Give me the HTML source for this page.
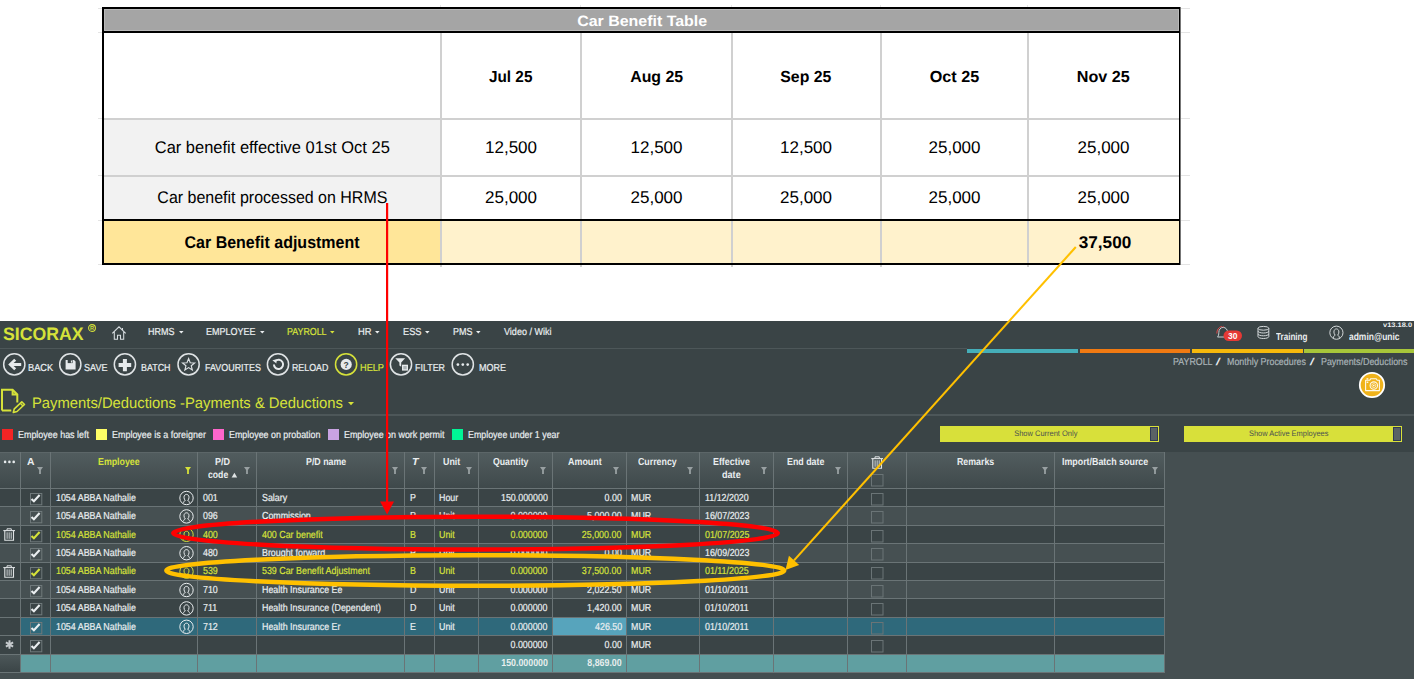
<!DOCTYPE html><html><head><meta charset="utf-8"><style>
*{margin:0;padding:0}
html,body{width:1420px;height:687px;overflow:hidden;background:#fff;position:relative}
.t{position:absolute;white-space:pre;font-family:"Liberation Sans",sans-serif;text-rendering:geometricPrecision}
.r{position:absolute}
.s{position:absolute;overflow:visible}
.dk .t{-webkit-text-stroke-width:0.2px}
</style></head><body><div class="r" style="left:104px;top:9px;width:1075px;height:22px;background:#a5a5a5;"></div>
<div class="r" style="left:104px;top:30px;width:1075px;height:1px;background:#b9b9b9;"></div>
<div class="r" style="left:104px;top:9px;width:1075px;height:1px;background:#b9b9b9;"></div>
<div class="r" style="left:104px;top:9px;width:1px;height:22px;background:#b9b9b9;"></div>
<div class="r" style="left:1178px;top:9px;width:1px;height:22px;background:#b9b9b9;"></div>
<div class="r" style="left:104px;top:120px;width:336px;height:55px;background:#f2f2f2;"></div>
<div class="r" style="left:104px;top:177px;width:336px;height:42px;background:#f2f2f2;"></div>
<div class="r" style="left:104px;top:221px;width:336px;height:42px;background:#ffe699;"></div>
<div class="r" style="left:442px;top:221px;width:737px;height:42px;background:#fff2cc;"></div>
<div class="r" style="left:104px;top:118px;width:1075px;height:2px;background:#d0d0d0;"></div>
<div class="r" style="left:104px;top:175px;width:1075px;height:2px;background:#d0d0d0;"></div>
<div class="r" style="left:440px;top:33px;width:2px;height:234px;background:#d0d0d0;"></div>
<div class="r" style="left:580px;top:33px;width:2px;height:234px;background:#d0d0d0;"></div>
<div class="r" style="left:731px;top:33px;width:2px;height:234px;background:#d0d0d0;"></div>
<div class="r" style="left:880px;top:33px;width:2px;height:234px;background:#d0d0d0;"></div>
<div class="r" style="left:1027px;top:33px;width:2px;height:234px;background:#d0d0d0;"></div>
<div class="r" style="left:98px;top:8px;width:4px;height:1px;background:#e4e4e4;"></div>
<div class="r" style="left:1181px;top:8px;width:9px;height:1px;background:#e4e4e4;"></div>
<div class="r" style="left:98px;top:32px;width:4px;height:1px;background:#e4e4e4;"></div>
<div class="r" style="left:1181px;top:32px;width:9px;height:1px;background:#e4e4e4;"></div>
<div class="r" style="left:98px;top:118px;width:4px;height:1px;background:#e4e4e4;"></div>
<div class="r" style="left:1181px;top:118px;width:9px;height:1px;background:#e4e4e4;"></div>
<div class="r" style="left:98px;top:175px;width:4px;height:1px;background:#e4e4e4;"></div>
<div class="r" style="left:1181px;top:175px;width:9px;height:1px;background:#e4e4e4;"></div>
<div class="r" style="left:98px;top:220px;width:4px;height:1px;background:#e4e4e4;"></div>
<div class="r" style="left:1181px;top:220px;width:9px;height:1px;background:#e4e4e4;"></div>
<div class="r" style="left:98px;top:264px;width:4px;height:1px;background:#e4e4e4;"></div>
<div class="r" style="left:1181px;top:264px;width:9px;height:1px;background:#e4e4e4;"></div>
<div class="r" style="left:440px;top:5px;width:1px;height:2px;background:#e8e8e8;"></div>
<div class="r" style="left:580px;top:5px;width:1px;height:2px;background:#e8e8e8;"></div>
<div class="r" style="left:731px;top:5px;width:1px;height:2px;background:#e8e8e8;"></div>
<div class="r" style="left:880px;top:5px;width:1px;height:2px;background:#e8e8e8;"></div>
<div class="r" style="left:1027px;top:5px;width:1px;height:2px;background:#e8e8e8;"></div>
<div class="r" style="left:102px;top:7px;width:1079px;height:2px;background:#000;"></div>
<div class="r" style="left:102px;top:31px;width:1078px;height:2px;background:#000;"></div>
<div class="r" style="left:102px;top:219px;width:1078px;height:2px;background:#000;"></div>
<div class="r" style="left:102px;top:263px;width:1078px;height:2px;background:#000;"></div>
<div class="r" style="left:102px;top:7px;width:2px;height:258px;background:#000;"></div>
<div class="r" style="left:1179px;top:7px;width:1px;height:258px;background:#000;"></div>
<div class="r" style="left:1180px;top:7px;width:1px;height:258px;background:#777;"></div>
<div class="t" style="left:580.87px;top:12.00px;font-size:15px;line-height:20px;color:#fff;font-weight:bold;font-style:normal;transform:scaleX(1.0633);transform-origin:50% 0;-webkit-text-stroke-width:0;">Car Benefit Table</div>
<div class="t" style="left:488.30px;top:67.00px;font-size:16px;line-height:21px;color:#000;font-weight:bold;font-style:normal;transform:scaleX(0.9580);transform-origin:50% 0;-webkit-text-stroke-width:0;">Jul 25</div>
<div class="t" style="left:629.80px;top:67.00px;font-size:16px;line-height:21px;color:#000;font-weight:bold;font-style:normal;transform:scaleX(0.9927);transform-origin:50% 0;-webkit-text-stroke-width:0;">Aug 25</div>
<div class="t" style="left:780.19px;top:67.00px;font-size:16px;line-height:21px;color:#000;font-weight:bold;font-style:normal;transform:scaleX(0.9879);transform-origin:50% 0;-webkit-text-stroke-width:0;">Sep 25</div>
<div class="t" style="left:930.02px;top:67.00px;font-size:16px;line-height:21px;color:#000;font-weight:bold;font-style:normal;transform:scaleX(1.0112);transform-origin:50% 0;-webkit-text-stroke-width:0;">Oct 25</div>
<div class="t" style="left:1077.24px;top:67.00px;font-size:16px;line-height:21px;color:#000;font-weight:bold;font-style:normal;transform:scaleX(1.0092);transform-origin:50% 0;-webkit-text-stroke-width:0;">Nov 25</div>
<div class="t" style="left:151.07px;top:136.00px;font-size:17px;line-height:23px;color:#000;font-weight:normal;font-style:normal;transform:scaleX(0.9692);transform-origin:50% 0;">Car benefit effective 01st Oct 25</div>
<div class="t" style="left:149.66px;top:186.00px;font-size:17px;line-height:23px;color:#000;font-weight:normal;font-style:normal;transform:scaleX(0.9400);transform-origin:50% 0;">Car benefit processed on HRMS</div>
<div class="t" style="left:178.67px;top:231.00px;font-size:17px;line-height:23px;color:#000;font-weight:bold;font-style:normal;transform:scaleX(0.9405);transform-origin:50% 0;-webkit-text-stroke-width:0;">Car Benefit adjustment</div>
<div class="t" style="left:485.01px;top:136.00px;font-size:17px;line-height:23px;color:#000;font-weight:normal;font-style:normal;">12,500</div>
<div class="t" style="left:630.51px;top:136.00px;font-size:17px;line-height:23px;color:#000;font-weight:normal;font-style:normal;">12,500</div>
<div class="t" style="left:780.01px;top:136.00px;font-size:17px;line-height:23px;color:#000;font-weight:normal;font-style:normal;">12,500</div>
<div class="t" style="left:928.51px;top:136.00px;font-size:17px;line-height:23px;color:#000;font-weight:normal;font-style:normal;">25,000</div>
<div class="t" style="left:1077.51px;top:136.00px;font-size:17px;line-height:23px;color:#000;font-weight:normal;font-style:normal;">25,000</div>
<div class="t" style="left:485.01px;top:186.00px;font-size:17px;line-height:23px;color:#000;font-weight:normal;font-style:normal;">25,000</div>
<div class="t" style="left:630.51px;top:186.00px;font-size:17px;line-height:23px;color:#000;font-weight:normal;font-style:normal;">25,000</div>
<div class="t" style="left:780.01px;top:186.00px;font-size:17px;line-height:23px;color:#000;font-weight:normal;font-style:normal;">25,000</div>
<div class="t" style="left:928.51px;top:186.00px;font-size:17px;line-height:23px;color:#000;font-weight:normal;font-style:normal;">25,000</div>
<div class="t" style="left:1077.51px;top:186.00px;font-size:17px;line-height:23px;color:#000;font-weight:normal;font-style:normal;">25,000</div>
<div class="t" style="left:1078.71px;top:231.00px;font-size:17px;line-height:23px;color:#000;font-weight:bold;font-style:normal;transform:scaleX(1.0099);transform-origin:50% 0;-webkit-text-stroke-width:0;">37,500</div>
<div class="dk">
<div class="r" style="left:0px;top:321px;width:1414px;height:358px;background:#3a4446;"></div>
<div class="t" style="left:2.60px;top:322.00px;font-size:18px;line-height:24px;color:#d6e23a;font-weight:bold;font-style:normal;transform:scaleX(0.9829);transform-origin:0 0;-webkit-text-stroke-width:0">SICORAX</div>
<svg class="s" style="left:88px;top:324px;" width="8" height="8" viewBox="0 0 8 8"><circle cx="4" cy="4" r="3.4" fill="none" stroke="#d6e23a" stroke-width="1.1"/><text x="4" y="6.2" font-size="5.5" font-family="Liberation Sans" font-weight="bold" text-anchor="middle" fill="#d6e23a">R</text></svg>
<svg class="s" style="left:111px;top:325px;" width="16" height="16" viewBox="0 0 16 16"><path d="M1.3 8.3L8 1.8L14.7 8.3M3.3 6.5V14.3H6.5V10.2H9.5V14.3H12.7V6.5M11.5 3V5.5" fill="none" stroke="#d7dde0" stroke-width="1.05" stroke-linejoin="miter"/></svg>
<div class="t" style="left:148.00px;top:326.00px;font-size:10.2px;line-height:14px;color:#eaeef0;font-weight:normal;font-style:normal;transform:scaleX(0.8833);transform-origin:0 0;">HRMS</div>
<svg class="s" style="left:178.5px;top:330.8px;" width="4.6" height="2.6" viewBox="0 0 4.6 2.6"><path d="M0 0H4.6L2.3 2.6Z" fill="#eaeef0"/></svg>
<div class="t" style="left:206.00px;top:326.00px;font-size:10.2px;line-height:14px;color:#eaeef0;font-weight:normal;font-style:normal;transform:scaleX(0.8829);transform-origin:0 0;">EMPLOYEE</div>
<svg class="s" style="left:259.5px;top:330.8px;" width="4.6" height="2.6" viewBox="0 0 4.6 2.6"><path d="M0 0H4.6L2.3 2.6Z" fill="#eaeef0"/></svg>
<div class="t" style="left:286.90px;top:326.00px;font-size:10.2px;line-height:14px;color:#d6e23a;font-weight:normal;font-style:normal;transform:scaleX(0.8678);transform-origin:0 0;">PAYROLL</div>
<svg class="s" style="left:330.2px;top:330.8px;" width="4.6" height="2.6" viewBox="0 0 4.6 2.6"><path d="M0 0H4.6L2.3 2.6Z" fill="#d6e23a"/></svg>
<div class="t" style="left:357.70px;top:326.00px;font-size:10.2px;line-height:14px;color:#eaeef0;font-weight:normal;font-style:normal;transform:scaleX(0.9172);transform-origin:0 0;">HR</div>
<svg class="s" style="left:375px;top:330.8px;" width="4.6" height="2.6" viewBox="0 0 4.6 2.6"><path d="M0 0H4.6L2.3 2.6Z" fill="#eaeef0"/></svg>
<div class="t" style="left:402.70px;top:326.00px;font-size:10.2px;line-height:14px;color:#eaeef0;font-weight:normal;font-style:normal;transform:scaleX(0.9073);transform-origin:0 0;">ESS</div>
<svg class="s" style="left:425.3px;top:330.8px;" width="4.6" height="2.6" viewBox="0 0 4.6 2.6"><path d="M0 0H4.6L2.3 2.6Z" fill="#eaeef0"/></svg>
<div class="t" style="left:452.80px;top:326.00px;font-size:10.2px;line-height:14px;color:#eaeef0;font-weight:normal;font-style:normal;transform:scaleX(0.8832);transform-origin:0 0;">PMS</div>
<svg class="s" style="left:476px;top:330.8px;" width="4.6" height="2.6" viewBox="0 0 4.6 2.6"><path d="M0 0H4.6L2.3 2.6Z" fill="#eaeef0"/></svg>
<div class="t" style="left:503.50px;top:326.00px;font-size:10.2px;line-height:14px;color:#eaeef0;font-weight:normal;font-style:normal;transform:scaleX(0.8860);transform-origin:0 0;">Video / Wiki</div>
<div class="r" style="left:0px;top:348px;width:967px;height:1px;background:#4d5759;"></div>
<svg class="s" style="left:1214px;top:324px;" width="18" height="18" viewBox="0 0 18 18"><path d="M3.5 13C4.5 12 4.8 10.5 4.8 8.6C4.8 5.6 6.6 3.4 9.2 3.4C11.8 3.4 13.6 5.6 13.6 8.6C13.6 10.5 13.9 12 14.9 13Z" fill="none" stroke="#c9cfd2" stroke-width="1"/><path d="M9.2 3.4V2.2M2.8 9.5C2.8 6 4.6 3.2 7.8 2.4" fill="none" stroke="#e04848" stroke-width="1"/></svg>
<svg class="s" style="left:1223px;top:330px;" width="20" height="12" viewBox="0 0 20 12"><rect x="0.5" y="0.5" width="18.5" height="10.5" rx="5.2" fill="#e53935"/><text x="9.7" y="8.7" font-size="8.5" font-family="Liberation Sans" font-weight="bold" text-anchor="middle" fill="#fff">30</text></svg>
<svg class="s" style="left:1256px;top:325px;" width="15" height="15" viewBox="0 0 15 15"><ellipse cx="7.4" cy="3.3" rx="5.4" ry="1.9" fill="none" stroke="#d3d8da" stroke-width="1"/><path d="M2 3.3V11.6C2 12.6 4.4 13.5 7.4 13.5C10.4 13.5 12.8 12.6 12.8 11.6V3.3M2 6.1C2 7.1 4.4 8 7.4 8C10.4 8 12.8 7.1 12.8 6.1M2 8.9C2 9.9 4.4 10.8 7.4 10.8C10.4 10.8 12.8 9.9 12.8 8.9" fill="none" stroke="#d3d8da" stroke-width="1"/></svg>
<div class="t" style="left:1276.30px;top:331.00px;font-size:10.2px;line-height:14px;color:#eaeef0;font-weight:bold;font-style:normal;transform:scaleX(0.7953);transform-origin:0 0;-webkit-text-stroke-width:0;">Training</div>
<svg class="s" style="left:1328px;top:324px;" width="17" height="17" viewBox="0 0 17 17"><circle cx="8.4" cy="8.7" r="6.6" fill="none" stroke="#d3d8da" stroke-width="1"/><path d="M5.5 14.3V13.2C5.5 12.3 6.4 11.6 7.2 11.2C6.4 10.5 5.9 9.3 5.9 8C5.9 6.1 7 4.9 8.4 4.9C9.8 4.9 10.9 6.1 10.9 8C10.9 9.3 10.4 10.5 9.6 11.2C10.4 11.6 11.3 12.3 11.3 13.2V14.3" fill="none" stroke="#d3d8da" stroke-width="1"/></svg>
<div class="t" style="left:1349.00px;top:331.00px;font-size:10.2px;line-height:14px;color:#eaeef0;font-weight:bold;font-style:normal;transform:scaleX(0.8296);transform-origin:0 0;-webkit-text-stroke-width:0;">admin@unic</div>
<div class="t" style="left:1383.30px;top:321.00px;font-size:6.5px;line-height:9px;color:#eaeef0;font-weight:bold;font-style:normal;transform:scaleX(1.1471);transform-origin:0 0;-webkit-text-stroke-width:0;">v13.18.0</div>
<div class="r" style="left:967px;top:349px;width:111px;height:4px;background:#45aeb9;"></div>
<div class="r" style="left:1080px;top:349px;width:110px;height:4px;background:#f07a12;"></div>
<div class="r" style="left:1192px;top:349px;width:111px;height:4px;background:#f6b90c;"></div>
<div class="r" style="left:1304px;top:349px;width:110px;height:4px;background:#a7c63a;"></div>
<svg class="s" style="left:1px;top:351px;" width="26" height="26" viewBox="0 0 26 26"><circle cx="13.3" cy="13.399999999999977" r="10.6" fill="none" stroke="#dfe3e5" stroke-width="1.5"/></svg>
<svg class="s" style="left:57px;top:351px;" width="26" height="26" viewBox="0 0 26 26"><circle cx="13.299999999999997" cy="13.399999999999977" r="10.6" fill="none" stroke="#dfe3e5" stroke-width="1.5"/></svg>
<svg class="s" style="left:112px;top:351px;" width="26" height="26" viewBox="0 0 26 26"><circle cx="12.900000000000006" cy="13.399999999999977" r="10.6" fill="none" stroke="#dfe3e5" stroke-width="1.5"/></svg>
<svg class="s" style="left:176px;top:351px;" width="26" height="26" viewBox="0 0 26 26"><circle cx="12.599999999999994" cy="13.399999999999977" r="10.6" fill="none" stroke="#dfe3e5" stroke-width="1.5"/></svg>
<svg class="s" style="left:265px;top:351px;" width="26" height="26" viewBox="0 0 26 26"><circle cx="13" cy="13.399999999999977" r="10.6" fill="none" stroke="#dfe3e5" stroke-width="1.5"/></svg>
<svg class="s" style="left:333px;top:351px;" width="26" height="26" viewBox="0 0 26 26"><circle cx="13.100000000000023" cy="13.399999999999977" r="10.6" fill="none" stroke="#d6e23a" stroke-width="1.5"/></svg>
<svg class="s" style="left:388px;top:351px;" width="26" height="26" viewBox="0 0 26 26"><circle cx="13" cy="13.399999999999977" r="10.6" fill="none" stroke="#dfe3e5" stroke-width="1.5"/></svg>
<svg class="s" style="left:450px;top:351px;" width="26" height="26" viewBox="0 0 26 26"><circle cx="12.800000000000011" cy="13.399999999999977" r="10.6" fill="none" stroke="#dfe3e5" stroke-width="1.5"/></svg>
<svg class="s" style="left:0px;top:350px;" width="30" height="30" viewBox="0 0 30 30"><path d="M8.2 14.4L14.2 8.7L16.2 10.7L13.6 13H21.2V16H13.6L16.2 18.3L14.2 20.2Z" fill="#e6eaec"/></svg>
<svg class="s" style="left:60px;top:355px;" width="20" height="20" viewBox="0 0 20 20"><path d="M5.6 5H14L15.6 6.6V14.5H5.6Z" fill="#e6eaec"/><rect x="7.7" y="5" width="4.9" height="3.1" fill="#3a4446"/><rect x="10.9" y="5.5" width="1.1" height="2.1" fill="#e6eaec"/></svg>
<svg class="s" style="left:115px;top:354px;" width="20" height="20" viewBox="0 0 20 20"><path d="M8 5H12V9.2H16.3V13.2H12V17.3H8V13.2H3.7V9.2H8Z" fill="#e6eaec" transform="translate(-0.1,-0.1)"/></svg>
<svg class="s" style="left:178px;top:354px;" width="21" height="21" viewBox="0 0 21 21"><path d="M10.60 4.50L12.22 8.68L16.69 8.92L13.22 11.75L14.36 16.08L10.60 13.65L6.84 16.08L7.98 11.75L4.51 8.92L8.98 8.68Z" fill="none" stroke="#dfe3e5" stroke-width="1.1" stroke-linejoin="miter"/></svg>
<svg class="s" style="left:268px;top:354px;" width="20" height="20" viewBox="0 0 20 20"><path d="M5.9 10.5A4.6 4.6 0 1 0 7.3 7.1" fill="none" stroke="#e6eaec" stroke-width="2"/><path d="M4.4 6.3L8.6 5.3L8.4 9.4Z" fill="#e6eaec"/></svg>
<svg class="s" style="left:336px;top:354px;" width="20" height="20" viewBox="0 0 20 20"><circle cx="10.2" cy="10.4" r="5.6" fill="#e6eaec"/><text x="10.2" y="13.5" font-size="8.5" font-family="Liberation Sans" font-weight="bold" text-anchor="middle" fill="#3a4446">?</text></svg>
<svg class="s" style="left:391px;top:354px;" width="20" height="20" viewBox="0 0 20 20"><path d="M4.3 4.2H14.1L10.2 8.4V12.8L8.4 11.6V8.4Z" fill="#e6eaec"/><rect x="11" y="10.7" width="6" height="5.9" fill="#e6eaec"/><rect x="12.3" y="12" width="3.4" height="3.3" fill="#aab2b5"/></svg>
<svg class="s" style="left:452px;top:354px;" width="20" height="20" viewBox="0 0 20 20"><circle cx="5.9" cy="10.6" r="1.35" fill="#e6eaec"/><circle cx="10.8" cy="10.6" r="1.35" fill="#e6eaec"/><circle cx="15.7" cy="10.6" r="1.35" fill="#e6eaec"/></svg>
<div class="t" style="left:27.90px;top:362.00px;font-size:10.2px;line-height:14px;color:#eaeef0;font-weight:normal;font-style:normal;transform:scaleX(0.9081);transform-origin:0 0;">BACK</div>
<div class="t" style="left:83.70px;top:362.00px;font-size:10.2px;line-height:14px;color:#eaeef0;font-weight:normal;font-style:normal;transform:scaleX(0.8889);transform-origin:0 0;">SAVE</div>
<div class="t" style="left:141.40px;top:362.00px;font-size:10.2px;line-height:14px;color:#eaeef0;font-weight:normal;font-style:normal;transform:scaleX(0.8733);transform-origin:0 0;">BATCH</div>
<div class="t" style="left:204.50px;top:362.00px;font-size:10.2px;line-height:14px;color:#eaeef0;font-weight:normal;font-style:normal;transform:scaleX(0.8780);transform-origin:0 0;">FAVOURITES</div>
<div class="t" style="left:292.20px;top:362.00px;font-size:10.2px;line-height:14px;color:#eaeef0;font-weight:normal;font-style:normal;transform:scaleX(0.8662);transform-origin:0 0;">RELOAD</div>
<div class="t" style="left:359.80px;top:362.00px;font-size:10.2px;line-height:14px;color:#d6e23a;font-weight:normal;font-style:normal;transform:scaleX(0.9014);transform-origin:0 0;">HELP</div>
<div class="t" style="left:415.20px;top:362.00px;font-size:10.2px;line-height:14px;color:#eaeef0;font-weight:normal;font-style:normal;transform:scaleX(0.8735);transform-origin:0 0;">FILTER</div>
<div class="t" style="left:478.90px;top:362.00px;font-size:10.2px;line-height:14px;color:#eaeef0;font-weight:normal;font-style:normal;transform:scaleX(0.8834);transform-origin:0 0;">MORE</div>
<div class="t" style="left:1173.10px;top:356.00px;font-size:10.2px;line-height:14px;color:#a9b3b7;font-weight:normal;font-style:normal;transform:scaleX(0.8678);transform-origin:0 0;">PAYROLL</div>
<div class="t" style="left:1215.60px;top:356.00px;font-size:10.2px;line-height:14px;color:#e8ecee;font-weight:bold;font-style:italic;transform:scaleX(1.2729);transform-origin:0 0;-webkit-text-stroke-width:0;">/</div>
<div class="t" style="left:1227.10px;top:356.00px;font-size:10.2px;line-height:14px;color:#a9b3b7;font-weight:normal;font-style:normal;transform:scaleX(0.8716);transform-origin:0 0;">Monthly Procedures</div>
<div class="t" style="left:1309.80px;top:356.00px;font-size:10.2px;line-height:14px;color:#e8ecee;font-weight:bold;font-style:italic;transform:scaleX(1.2729);transform-origin:0 0;-webkit-text-stroke-width:0;">/</div>
<div class="t" style="left:1320.90px;top:356.00px;font-size:10.2px;line-height:14px;color:#a9b3b7;font-weight:normal;font-style:normal;transform:scaleX(0.8725);transform-origin:0 0;">Payments/Deductions</div>
<svg class="s" style="left:1358px;top:371px;" width="28" height="28" viewBox="0 0 28 28"><circle cx="14" cy="14" r="12.2" fill="#f0b31b" stroke="#fff" stroke-width="1.8"/><path d="M7.6 9.3H11.6L12.8 7.7H18.2L19.2 9.3H21.4V19.6H7.6Z" fill="none" stroke="#fff" stroke-opacity="0.9" stroke-width="1.1" stroke-linejoin="round"/><circle cx="15.8" cy="14.6" r="3.7" fill="none" stroke="#fff" stroke-opacity="0.9" stroke-width="1.1"/><circle cx="15.8" cy="14.6" r="2" fill="none" stroke="#fff" stroke-opacity="0.7" stroke-width="0.9"/><circle cx="15.8" cy="14.6" r="0.8" fill="#fff"/><rect x="8.5" y="7.2" width="1.8" height="1.4" fill="#fff" fill-opacity="0.9"/><rect x="8.7" y="10.6" width="1.6" height="1.4" fill="#fff" fill-opacity="0.9"/></svg>
<svg class="s" style="left:0px;top:388px;" width="27" height="27" viewBox="0 0 27 27"><path d="M2 22.5V1.8H12.6L17.3 6.5V14.6M11.3 22.5H2M12.6 1.8V6.5H17.3" fill="none" stroke="#d6e23a" stroke-width="2"/><path d="M13.3 24.5L14.3 20.8L21.8 13.8L24.5 16.5L17 23.5Z" fill="none" stroke="#d6e23a" stroke-width="1.6" stroke-linejoin="round"/><path d="M20.3 15.3L23 18" stroke="#d6e23a" stroke-width="1.4"/></svg>
<div class="t" style="left:32.00px;top:394.00px;font-size:15.2px;line-height:20px;color:#d6e23a;font-weight:normal;font-style:normal;transform:scaleX(0.9743);transform-origin:0 0;-webkit-text-stroke-width:0">Payments/Deductions -Payments &amp; Deductions</div>
<svg class="s" style="left:348px;top:401.8px;" width="6" height="3.2" viewBox="0 0 6 3.2"><path d="M0 0H6L3.0 3.2Z" fill="#d6e23a"/></svg>
<div class="r" style="left:0px;top:414px;width:1414px;height:2px;background:#4d5759;"></div>
<div class="r" style="left:2px;top:429px;width:11px;height:11px;background:#f42424;"></div>
<div class="t" style="left:18.00px;top:429.00px;font-size:10.2px;line-height:14px;color:#eaeef0;font-weight:normal;font-style:normal;transform:scaleX(0.8764);transform-origin:0 0;">Employee has left</div>
<div class="r" style="left:96px;top:429px;width:11px;height:11px;background:#ffff66;"></div>
<div class="t" style="left:112.00px;top:429.00px;font-size:10.2px;line-height:14px;color:#eaeef0;font-weight:normal;font-style:normal;transform:scaleX(0.8779);transform-origin:0 0;">Employee is a foreigner</div>
<div class="r" style="left:213px;top:429px;width:11px;height:11px;background:#ff66cc;"></div>
<div class="t" style="left:229.20px;top:429.00px;font-size:10.2px;line-height:14px;color:#eaeef0;font-weight:normal;font-style:normal;transform:scaleX(0.8727);transform-origin:0 0;">Employee on probation</div>
<div class="r" style="left:328px;top:429px;width:11px;height:11px;background:#c9a3e3;"></div>
<div class="t" style="left:344.20px;top:429.00px;font-size:10.2px;line-height:14px;color:#eaeef0;font-weight:normal;font-style:normal;transform:scaleX(0.8740);transform-origin:0 0;">Employee on work permit</div>
<div class="r" style="left:452px;top:429px;width:11px;height:11px;background:#00f596;"></div>
<div class="t" style="left:468.00px;top:429.00px;font-size:10.2px;line-height:14px;color:#eaeef0;font-weight:normal;font-style:normal;transform:scaleX(0.8682);transform-origin:0 0;">Employee under 1 year</div>
<div class="r" style="left:940px;top:426px;width:219px;height:16px;background:#d8e03a;"></div>
<div class="r" style="left:1150px;top:427px;width:8px;height:14px;background:#2f3a55;"></div>
<div class="r" style="left:1151px;top:428px;width:6px;height:12px;background:#5a6265;"></div>
<div class="t" style="left:1011.69px;top:428.00px;font-size:8px;line-height:11px;color:#4a5050;font-weight:normal;font-style:normal;transform:scaleX(0.9360);transform-origin:50% 0;-webkit-text-stroke-width:0">Show Current Only</div>
<div class="r" style="left:1184px;top:426px;width:218px;height:16px;background:#d8e03a;"></div>
<div class="r" style="left:1393px;top:427px;width:8px;height:14px;background:#2f3a55;"></div>
<div class="r" style="left:1394px;top:428px;width:6px;height:12px;background:#5a6265;"></div>
<div class="t" style="left:1246.28px;top:428.00px;font-size:8px;line-height:11px;color:#4a5050;font-weight:normal;font-style:normal;transform:scaleX(0.9305);transform-origin:50% 0;-webkit-text-stroke-width:0">Show Active Employees</div>
<div class="r" style="left:1165px;top:452px;width:249px;height:227px;background:#454f51;"></div>
<div class="r" style="left:0px;top:672px;width:1165px;height:7px;background:#444e50;"></div>
<div class="r" style="left:0px;top:452px;width:1165px;height:36px;background:;background:linear-gradient(#525d5f,#3f494b)"></div>
<div class="r" style="left:0px;top:452px;width:1165px;height:1px;background:#5c6668;"></div>
<div class="r" style="left:0px;top:488px;width:1165px;height:18px;background:#3a4446;"></div>
<div class="r" style="left:0px;top:506px;width:1165px;height:19px;background:#465052;"></div>
<div class="r" style="left:0px;top:525px;width:1165px;height:18px;background:#3a4446;"></div>
<div class="r" style="left:0px;top:543px;width:1165px;height:19px;background:#465052;"></div>
<div class="r" style="left:0px;top:562px;width:1165px;height:18px;background:#3a4446;"></div>
<div class="r" style="left:0px;top:580px;width:1165px;height:18px;background:#465052;"></div>
<div class="r" style="left:0px;top:598px;width:1165px;height:19px;background:#3a4446;"></div>
<div class="r" style="left:0px;top:617px;width:21px;height:18px;background:#3a4446;"></div>
<div class="r" style="left:21px;top:617px;width:1144px;height:18px;background:#2f697b;"></div>
<div class="r" style="left:0px;top:635px;width:1165px;height:19px;background:#3a4446;"></div>
<div class="r" style="left:0px;top:654px;width:21px;height:18px;background:;background:linear-gradient(#4d585a,#3b4547)"></div>
<div class="r" style="left:21px;top:654px;width:1144px;height:18px;background:#609fa1;"></div>
<div class="r" style="left:553px;top:617px;width:73px;height:18px;background:#57a4bc;"></div>
<div class="r" style="left:0px;top:488px;width:1165px;height:1px;background:#6a7476;"></div>
<div class="r" style="left:0px;top:506px;width:1165px;height:1px;background:#6a7476;"></div>
<div class="r" style="left:0px;top:525px;width:1165px;height:1px;background:#6a7476;"></div>
<div class="r" style="left:0px;top:543px;width:1165px;height:1px;background:#6a7476;"></div>
<div class="r" style="left:0px;top:562px;width:1165px;height:1px;background:#6a7476;"></div>
<div class="r" style="left:0px;top:580px;width:1165px;height:1px;background:#6a7476;"></div>
<div class="r" style="left:0px;top:598px;width:1165px;height:1px;background:#6a7476;"></div>
<div class="r" style="left:0px;top:617px;width:1165px;height:1px;background:#6a7476;"></div>
<div class="r" style="left:0px;top:635px;width:1165px;height:1px;background:#6a7476;"></div>
<div class="r" style="left:0px;top:654px;width:1165px;height:1px;background:#6a7476;"></div>
<div class="r" style="left:0px;top:672px;width:1165px;height:1px;background:#6a7476;"></div>
<div class="r" style="left:20px;top:452px;width:1px;height:220px;background:#6a7476;"></div>
<div class="r" style="left:50px;top:452px;width:1px;height:220px;background:#6a7476;"></div>
<div class="r" style="left:197px;top:452px;width:1px;height:220px;background:#6a7476;"></div>
<div class="r" style="left:256px;top:452px;width:1px;height:220px;background:#6a7476;"></div>
<div class="r" style="left:404px;top:452px;width:1px;height:220px;background:#6a7476;"></div>
<div class="r" style="left:434px;top:452px;width:1px;height:220px;background:#6a7476;"></div>
<div class="r" style="left:478px;top:452px;width:1px;height:220px;background:#6a7476;"></div>
<div class="r" style="left:552px;top:452px;width:1px;height:220px;background:#6a7476;"></div>
<div class="r" style="left:626px;top:452px;width:1px;height:220px;background:#6a7476;"></div>
<div class="r" style="left:699px;top:452px;width:1px;height:220px;background:#6a7476;"></div>
<div class="r" style="left:773px;top:452px;width:1px;height:220px;background:#6a7476;"></div>
<div class="r" style="left:847px;top:452px;width:1px;height:220px;background:#6a7476;"></div>
<div class="r" style="left:906px;top:452px;width:1px;height:220px;background:#6a7476;"></div>
<div class="r" style="left:1054px;top:452px;width:1px;height:220px;background:#6a7476;"></div>
<div class="r" style="left:1164px;top:452px;width:1px;height:220px;background:#6a7476;"></div>
<svg class="s" style="left:3px;top:460px;" width="4" height="4" viewBox="0 0 4 4"><circle cx="2.0999999999999996" cy="1.9" r="1.3" fill="#e8ecee"/></svg>
<svg class="s" style="left:7px;top:460px;" width="4" height="4" viewBox="0 0 4 4"><circle cx="2.4000000000000004" cy="1.9" r="1.3" fill="#e8ecee"/></svg>
<svg class="s" style="left:12px;top:460px;" width="4" height="4" viewBox="0 0 4 4"><circle cx="1.6999999999999993" cy="1.9" r="1.3" fill="#e8ecee"/></svg>
<div class="t" style="left:26.60px;top:456.00px;font-size:10.2px;line-height:14px;color:#eaeef0;font-weight:bold;font-style:normal;transform:scaleX(1.0191);transform-origin:0 0;-webkit-text-stroke-width:0;">A</div>
<svg class="s" style="left:37px;top:467px;" width="6" height="7" viewBox="0 0 6 7"><path d="M0 0H6L3.9 3V7H2.1V3Z" fill="#98a0a2"/></svg>
<div class="t" style="left:98.40px;top:456.00px;font-size:10.2px;line-height:14px;color:#d6e23a;font-weight:bold;font-style:normal;transform:scaleX(0.8662);transform-origin:0 0;-webkit-text-stroke-width:0;">Employee</div>
<svg class="s" style="left:185px;top:467px;" width="6" height="7" viewBox="0 0 6 7"><path d="M0 0H6L3.9 3V7H2.1V3Z" fill="#d6e23a"/></svg>
<div class="t" style="left:215.00px;top:456.00px;font-size:10.2px;line-height:14px;color:#eaeef0;font-weight:bold;font-style:normal;transform:scaleX(0.8832);transform-origin:0 0;-webkit-text-stroke-width:0;">P/D</div>
<div class="t" style="left:208.00px;top:469.00px;font-size:10.2px;line-height:14px;color:#eaeef0;font-weight:bold;font-style:normal;transform:scaleX(0.8494);transform-origin:0 0;-webkit-text-stroke-width:0;">code</div>
<svg class="s" style="left:231px;top:472px;" width="7" height="6" viewBox="0 0 7 6"><path d="M0.6 5.6H6.2L3.4 0.8Z" fill="#dfe3e4"/></svg>
<svg class="s" style="left:244px;top:467px;" width="6" height="7" viewBox="0 0 6 7"><path d="M0 0H6L3.9 3V7H2.1V3Z" fill="#98a0a2"/></svg>
<div class="t" style="left:305.80px;top:456.00px;font-size:10.2px;line-height:14px;color:#eaeef0;font-weight:bold;font-style:normal;transform:scaleX(0.8657);transform-origin:0 0;-webkit-text-stroke-width:0;">P/D name</div>
<svg class="s" style="left:392px;top:467px;" width="6" height="7" viewBox="0 0 6 7"><path d="M0 0H6L3.9 3V7H2.1V3Z" fill="#98a0a2"/></svg>
<div class="t" style="left:412.00px;top:456.00px;font-size:10.2px;line-height:14px;color:#eaeef0;font-weight:bold;font-style:italic;transform:scaleX(1.0452);transform-origin:0 0;-webkit-text-stroke-width:0;">T</div>
<svg class="s" style="left:421px;top:467px;" width="6" height="7" viewBox="0 0 6 7"><path d="M0 0H6L3.9 3V7H2.1V3Z" fill="#98a0a2"/></svg>
<div class="t" style="left:442.60px;top:456.00px;font-size:10.2px;line-height:14px;color:#eaeef0;font-weight:bold;font-style:normal;transform:scaleX(0.8688);transform-origin:0 0;-webkit-text-stroke-width:0;">Unit</div>
<svg class="s" style="left:466px;top:467px;" width="6" height="7" viewBox="0 0 6 7"><path d="M0 0H6L3.9 3V7H2.1V3Z" fill="#98a0a2"/></svg>
<div class="t" style="left:492.50px;top:456.00px;font-size:10.2px;line-height:14px;color:#eaeef0;font-weight:bold;font-style:normal;transform:scaleX(0.8569);transform-origin:0 0;-webkit-text-stroke-width:0;">Quantity</div>
<svg class="s" style="left:540px;top:467px;" width="6" height="7" viewBox="0 0 6 7"><path d="M0 0H6L3.9 3V7H2.1V3Z" fill="#98a0a2"/></svg>
<div class="t" style="left:567.50px;top:456.00px;font-size:10.2px;line-height:14px;color:#eaeef0;font-weight:bold;font-style:normal;transform:scaleX(0.8760);transform-origin:0 0;-webkit-text-stroke-width:0;">Amount</div>
<svg class="s" style="left:613px;top:467px;" width="6" height="7" viewBox="0 0 6 7"><path d="M0 0H6L3.9 3V7H2.1V3Z" fill="#98a0a2"/></svg>
<div class="t" style="left:638.40px;top:456.00px;font-size:10.2px;line-height:14px;color:#eaeef0;font-weight:bold;font-style:normal;transform:scaleX(0.8648);transform-origin:0 0;-webkit-text-stroke-width:0;">Currency</div>
<svg class="s" style="left:687px;top:467px;" width="6" height="7" viewBox="0 0 6 7"><path d="M0 0H6L3.9 3V7H2.1V3Z" fill="#98a0a2"/></svg>
<div class="t" style="left:713.40px;top:456.00px;font-size:10.2px;line-height:14px;color:#eaeef0;font-weight:bold;font-style:normal;transform:scaleX(0.8709);transform-origin:0 0;-webkit-text-stroke-width:0;">Effective</div>
<div class="t" style="left:722.20px;top:469.00px;font-size:10.2px;line-height:14px;color:#eaeef0;font-weight:bold;font-style:normal;transform:scaleX(0.8925);transform-origin:0 0;-webkit-text-stroke-width:0;">date</div>
<svg class="s" style="left:761px;top:467px;" width="6" height="7" viewBox="0 0 6 7"><path d="M0 0H6L3.9 3V7H2.1V3Z" fill="#98a0a2"/></svg>
<div class="t" style="left:786.90px;top:456.00px;font-size:10.2px;line-height:14px;color:#eaeef0;font-weight:bold;font-style:normal;transform:scaleX(0.8695);transform-origin:0 0;-webkit-text-stroke-width:0;">End date</div>
<svg class="s" style="left:835px;top:467px;" width="6" height="7" viewBox="0 0 6 7"><path d="M0 0H6L3.9 3V7H2.1V3Z" fill="#98a0a2"/></svg>
<svg class="s" style="left:871px;top:456px;" width="13" height="13" viewBox="0 0 13 13"><path d="M0.3 2.6H12" stroke="#dfe3e5" stroke-width="1.1"/><path d="M4 2.3V0.8H8.3V2.3" fill="none" stroke="#dfe3e5" stroke-width="1"/><path d="M1.8 2.8V12.2H10.5V2.8" fill="none" stroke="#dfe3e5" stroke-width="1.1"/><path d="M4.1 4.3V10.8M6.15 4.3V10.8M8.2 4.3V10.8" stroke="#dfe3e5" stroke-width="0.9"/></svg>
<svg class="s" style="left:871px;top:474px;" width="13" height="13" viewBox="0 0 13 13"><rect x="0.5" y="0.5" width="11.5" height="11.5" fill="none" stroke="#6a7476" stroke-width="1"/></svg>
<div class="t" style="left:957.00px;top:456.00px;font-size:10.2px;line-height:14px;color:#eaeef0;font-weight:bold;font-style:normal;transform:scaleX(0.8635);transform-origin:0 0;-webkit-text-stroke-width:0;">Remarks</div>
<svg class="s" style="left:1042px;top:467px;" width="6" height="7" viewBox="0 0 6 7"><path d="M0 0H6L3.9 3V7H2.1V3Z" fill="#98a0a2"/></svg>
<div class="t" style="left:1061.50px;top:456.00px;font-size:10.2px;line-height:14px;color:#eaeef0;font-weight:bold;font-style:normal;transform:scaleX(0.8700);transform-origin:0 0;-webkit-text-stroke-width:0;">Import/Batch source</div>
<svg class="s" style="left:1152px;top:467px;" width="6" height="7" viewBox="0 0 6 7"><path d="M0 0H6L3.9 3V7H2.1V3Z" fill="#98a0a2"/></svg>
<svg class="s" style="left:30px;top:493px;" width="13" height="13" viewBox="0 0 13 13"><rect x="0.5" y="0.5" width="11.3" height="11.3" fill="none" stroke="#6f797b" stroke-width="1"/><path d="M1.5 6L3.9 8.3L9.6 2" fill="none" stroke="#eaeef0" stroke-width="2.1" stroke-linecap="butt"/></svg>
<div class="t" style="left:56.00px;top:492.00px;font-size:10.2px;line-height:14px;color:#eaeef0;font-weight:normal;font-style:normal;transform:scaleX(0.8708);transform-origin:0 0;">1054 ABBA Nathalie</div>
<svg class="s" style="left:178px;top:490px;" width="16" height="16" viewBox="0 0 16 16"><circle cx="8.5" cy="8.0" r="6.7" fill="none" stroke="#eaeef0" stroke-width="1"/><path d="M5.2 12.9V12.3C5.2 11.5 6 10.9 6.9 10.5C6.1 9.9 5.6 8.6 5.6 7.3C5.6 5.6 6.7 4.4 8.1 4.4C9.5 4.4 10.6 5.6 10.6 7.3C10.6 8.6 10.1 9.9 9.3 10.5C10.2 10.9 11 11.5 11 12.3V12.9" fill="none" stroke="#eaeef0" stroke-width="1" transform="translate(0.4,0.0)"/></svg>
<div class="t" style="left:202.90px;top:492.00px;font-size:10.2px;line-height:14px;color:#eaeef0;font-weight:normal;font-style:normal;transform:scaleX(0.8708);transform-origin:0 0;">001</div>
<div class="t" style="left:261.90px;top:492.00px;font-size:10.2px;line-height:14px;color:#eaeef0;font-weight:normal;font-style:normal;transform:scaleX(0.8708);transform-origin:0 0;">Salary</div>
<div class="t" style="left:410.30px;top:492.00px;font-size:10.2px;line-height:14px;color:#eaeef0;font-weight:normal;font-style:normal;transform:scaleX(0.8708);transform-origin:0 0;">P</div>
<div class="t" style="left:439.10px;top:492.00px;font-size:10.2px;line-height:14px;color:#eaeef0;font-weight:normal;font-style:normal;transform:scaleX(0.8708);transform-origin:0 0;">Hour</div>
<div class="t" style="left:493.92px;top:492.00px;font-size:10.2px;line-height:14px;color:#eaeef0;font-weight:normal;font-style:normal;transform:scaleX(0.8708);transform-origin:100% 0;">150.000000</div>
<div class="t" style="left:601.86px;top:492.00px;font-size:10.2px;line-height:14px;color:#eaeef0;font-weight:normal;font-style:normal;transform:scaleX(0.8708);transform-origin:100% 0;">0.00</div>
<div class="t" style="left:630.90px;top:492.00px;font-size:10.2px;line-height:14px;color:#eaeef0;font-weight:normal;font-style:normal;transform:scaleX(0.8708);transform-origin:0 0;">MUR</div>
<div class="t" style="left:705.00px;top:492.00px;font-size:10.2px;line-height:14px;color:#eaeef0;font-weight:normal;font-style:normal;transform:scaleX(0.8708);transform-origin:0 0;">11/12/2020</div>
<svg class="s" style="left:871px;top:493px;" width="13" height="13" viewBox="0 0 13 13"><rect x="0.5" y="0.5" width="11.5" height="11.5" fill="none" stroke="#6a7476" stroke-width="1"/></svg>
<svg class="s" style="left:30px;top:511px;" width="13" height="13" viewBox="0 0 13 13"><rect x="0.5" y="0.5" width="11.3" height="11.3" fill="none" stroke="#6f797b" stroke-width="1"/><path d="M1.5 6L3.9 8.3L9.6 2" fill="none" stroke="#eaeef0" stroke-width="2.1" stroke-linecap="butt"/></svg>
<div class="t" style="left:56.00px;top:510.00px;font-size:10.2px;line-height:14px;color:#eaeef0;font-weight:normal;font-style:normal;transform:scaleX(0.8708);transform-origin:0 0;">1054 ABBA Nathalie</div>
<svg class="s" style="left:178px;top:508px;" width="16" height="16" viewBox="0 0 16 16"><circle cx="8.5" cy="8.399999999999977" r="6.7" fill="none" stroke="#eaeef0" stroke-width="1"/><path d="M5.2 12.9V12.3C5.2 11.5 6 10.9 6.9 10.5C6.1 9.9 5.6 8.6 5.6 7.3C5.6 5.6 6.7 4.4 8.1 4.4C9.5 4.4 10.6 5.6 10.6 7.3C10.6 8.6 10.1 9.9 9.3 10.5C10.2 10.9 11 11.5 11 12.3V12.9" fill="none" stroke="#eaeef0" stroke-width="1" transform="translate(0.4,0.39999999999997726)"/></svg>
<div class="t" style="left:202.90px;top:510.00px;font-size:10.2px;line-height:14px;color:#eaeef0;font-weight:normal;font-style:normal;transform:scaleX(0.8708);transform-origin:0 0;">096</div>
<div class="t" style="left:261.90px;top:510.00px;font-size:10.2px;line-height:14px;color:#eaeef0;font-weight:normal;font-style:normal;transform:scaleX(0.8708);transform-origin:0 0;">Commission</div>
<div class="t" style="left:410.30px;top:510.00px;font-size:10.2px;line-height:14px;color:#eaeef0;font-weight:normal;font-style:normal;transform:scaleX(0.8708);transform-origin:0 0;">P</div>
<div class="t" style="left:439.10px;top:510.00px;font-size:10.2px;line-height:14px;color:#eaeef0;font-weight:normal;font-style:normal;transform:scaleX(0.8708);transform-origin:0 0;">Unit</div>
<div class="t" style="left:505.27px;top:510.00px;font-size:10.2px;line-height:14px;color:#eaeef0;font-weight:normal;font-style:normal;transform:scaleX(0.8708);transform-origin:100% 0;">0.000000</div>
<div class="t" style="left:582.01px;top:510.00px;font-size:10.2px;line-height:14px;color:#eaeef0;font-weight:normal;font-style:normal;transform:scaleX(0.8708);transform-origin:100% 0;">5,000.00</div>
<div class="t" style="left:630.90px;top:510.00px;font-size:10.2px;line-height:14px;color:#eaeef0;font-weight:normal;font-style:normal;transform:scaleX(0.8708);transform-origin:0 0;">MUR</div>
<div class="t" style="left:705.00px;top:510.00px;font-size:10.2px;line-height:14px;color:#eaeef0;font-weight:normal;font-style:normal;transform:scaleX(0.8708);transform-origin:0 0;">16/07/2023</div>
<svg class="s" style="left:871px;top:511px;" width="13" height="13" viewBox="0 0 13 13"><rect x="0.5" y="0.5" width="11.5" height="11.5" fill="none" stroke="#6a7476" stroke-width="1"/></svg>
<svg class="s" style="left:3px;top:528px;" width="13" height="13" viewBox="0 0 13 13"><path d="M0.3 2.6H12" stroke="#dfe3e5" stroke-width="1.1"/><path d="M4 2.3V0.8H8.3V2.3" fill="none" stroke="#dfe3e5" stroke-width="1"/><path d="M1.8 2.8V12.2H10.5V2.8" fill="none" stroke="#dfe3e5" stroke-width="1.1"/><path d="M4.1 4.3V10.8M6.15 4.3V10.8M8.2 4.3V10.8" stroke="#dfe3e5" stroke-width="0.9"/></svg>
<svg class="s" style="left:30px;top:530px;" width="13" height="13" viewBox="0 0 13 13"><rect x="0.5" y="0.5" width="11.3" height="11.3" fill="none" stroke="#6f797b" stroke-width="1"/><path d="M1.5 6L3.9 8.3L9.6 2" fill="none" stroke="#d6e23a" stroke-width="2.1" stroke-linecap="butt"/></svg>
<div class="t" style="left:56.00px;top:529.00px;font-size:10.2px;line-height:14px;color:#d6e23a;font-weight:normal;font-style:normal;transform:scaleX(0.8708);transform-origin:0 0;">1054 ABBA Nathalie</div>
<svg class="s" style="left:178px;top:527px;" width="16" height="16" viewBox="0 0 16 16"><circle cx="8.5" cy="7.7999999999999545" r="6.7" fill="none" stroke="#d6e23a" stroke-width="1"/><path d="M5.2 12.9V12.3C5.2 11.5 6 10.9 6.9 10.5C6.1 9.9 5.6 8.6 5.6 7.3C5.6 5.6 6.7 4.4 8.1 4.4C9.5 4.4 10.6 5.6 10.6 7.3C10.6 8.6 10.1 9.9 9.3 10.5C10.2 10.9 11 11.5 11 12.3V12.9" fill="none" stroke="#d6e23a" stroke-width="1" transform="translate(0.4,-0.20000000000004547)"/></svg>
<div class="t" style="left:202.90px;top:529.00px;font-size:10.2px;line-height:14px;color:#d6e23a;font-weight:normal;font-style:normal;transform:scaleX(0.8708);transform-origin:0 0;">400</div>
<div class="t" style="left:261.90px;top:529.00px;font-size:10.2px;line-height:14px;color:#d6e23a;font-weight:normal;font-style:normal;transform:scaleX(0.8708);transform-origin:0 0;">400 Car benefit</div>
<div class="t" style="left:410.30px;top:529.00px;font-size:10.2px;line-height:14px;color:#d6e23a;font-weight:normal;font-style:normal;transform:scaleX(0.8708);transform-origin:0 0;">B</div>
<div class="t" style="left:439.10px;top:529.00px;font-size:10.2px;line-height:14px;color:#d6e23a;font-weight:normal;font-style:normal;transform:scaleX(0.8708);transform-origin:0 0;">Unit</div>
<div class="t" style="left:505.27px;top:529.00px;font-size:10.2px;line-height:14px;color:#d6e23a;font-weight:normal;font-style:normal;transform:scaleX(0.8708);transform-origin:100% 0;">0.000000</div>
<div class="t" style="left:576.34px;top:529.00px;font-size:10.2px;line-height:14px;color:#d6e23a;font-weight:normal;font-style:normal;transform:scaleX(0.8708);transform-origin:100% 0;">25,000.00</div>
<div class="t" style="left:630.90px;top:529.00px;font-size:10.2px;line-height:14px;color:#d6e23a;font-weight:normal;font-style:normal;transform:scaleX(0.8708);transform-origin:0 0;">MUR</div>
<div class="t" style="left:705.00px;top:529.00px;font-size:10.2px;line-height:14px;color:#d6e23a;font-weight:normal;font-style:normal;transform:scaleX(0.8708);transform-origin:0 0;">01/07/2025</div>
<svg class="s" style="left:871px;top:530px;" width="13" height="13" viewBox="0 0 13 13"><rect x="0.5" y="0.5" width="11.5" height="11.5" fill="none" stroke="#6a7476" stroke-width="1"/></svg>
<svg class="s" style="left:30px;top:548px;" width="13" height="13" viewBox="0 0 13 13"><rect x="0.5" y="0.5" width="11.3" height="11.3" fill="none" stroke="#6f797b" stroke-width="1"/><path d="M1.5 6L3.9 8.3L9.6 2" fill="none" stroke="#eaeef0" stroke-width="2.1" stroke-linecap="butt"/></svg>
<div class="t" style="left:56.00px;top:547.00px;font-size:10.2px;line-height:14px;color:#eaeef0;font-weight:normal;font-style:normal;transform:scaleX(0.8708);transform-origin:0 0;">1054 ABBA Nathalie</div>
<svg class="s" style="left:178px;top:545px;" width="16" height="16" viewBox="0 0 16 16"><circle cx="8.5" cy="8.200000000000045" r="6.7" fill="none" stroke="#eaeef0" stroke-width="1"/><path d="M5.2 12.9V12.3C5.2 11.5 6 10.9 6.9 10.5C6.1 9.9 5.6 8.6 5.6 7.3C5.6 5.6 6.7 4.4 8.1 4.4C9.5 4.4 10.6 5.6 10.6 7.3C10.6 8.6 10.1 9.9 9.3 10.5C10.2 10.9 11 11.5 11 12.3V12.9" fill="none" stroke="#eaeef0" stroke-width="1" transform="translate(0.4,0.20000000000004547)"/></svg>
<div class="t" style="left:202.90px;top:547.00px;font-size:10.2px;line-height:14px;color:#eaeef0;font-weight:normal;font-style:normal;transform:scaleX(0.8708);transform-origin:0 0;">480</div>
<div class="t" style="left:261.90px;top:547.00px;font-size:10.2px;line-height:14px;color:#eaeef0;font-weight:normal;font-style:normal;transform:scaleX(0.8708);transform-origin:0 0;">Brought forward</div>
<div class="t" style="left:410.30px;top:547.00px;font-size:10.2px;line-height:14px;color:#eaeef0;font-weight:normal;font-style:normal;transform:scaleX(0.8708);transform-origin:0 0;">P</div>
<div class="t" style="left:439.10px;top:547.00px;font-size:10.2px;line-height:14px;color:#eaeef0;font-weight:normal;font-style:normal;transform:scaleX(0.8708);transform-origin:0 0;">Unit</div>
<div class="t" style="left:505.27px;top:547.00px;font-size:10.2px;line-height:14px;color:#eaeef0;font-weight:normal;font-style:normal;transform:scaleX(0.8708);transform-origin:100% 0;">0.000000</div>
<div class="t" style="left:601.86px;top:547.00px;font-size:10.2px;line-height:14px;color:#eaeef0;font-weight:normal;font-style:normal;transform:scaleX(0.8708);transform-origin:100% 0;">0.00</div>
<div class="t" style="left:630.90px;top:547.00px;font-size:10.2px;line-height:14px;color:#eaeef0;font-weight:normal;font-style:normal;transform:scaleX(0.8708);transform-origin:0 0;">MUR</div>
<div class="t" style="left:705.00px;top:547.00px;font-size:10.2px;line-height:14px;color:#eaeef0;font-weight:normal;font-style:normal;transform:scaleX(0.8708);transform-origin:0 0;">16/09/2023</div>
<svg class="s" style="left:871px;top:548px;" width="13" height="13" viewBox="0 0 13 13"><rect x="0.5" y="0.5" width="11.5" height="11.5" fill="none" stroke="#6a7476" stroke-width="1"/></svg>
<svg class="s" style="left:3px;top:565px;" width="13" height="13" viewBox="0 0 13 13"><path d="M0.3 2.6H12" stroke="#dfe3e5" stroke-width="1.1"/><path d="M4 2.3V0.8H8.3V2.3" fill="none" stroke="#dfe3e5" stroke-width="1"/><path d="M1.8 2.8V12.2H10.5V2.8" fill="none" stroke="#dfe3e5" stroke-width="1.1"/><path d="M4.1 4.3V10.8M6.15 4.3V10.8M8.2 4.3V10.8" stroke="#dfe3e5" stroke-width="0.9"/></svg>
<svg class="s" style="left:30px;top:567px;" width="13" height="13" viewBox="0 0 13 13"><rect x="0.5" y="0.5" width="11.3" height="11.3" fill="none" stroke="#6f797b" stroke-width="1"/><path d="M1.5 6L3.9 8.3L9.6 2" fill="none" stroke="#d6e23a" stroke-width="2.1" stroke-linecap="butt"/></svg>
<div class="t" style="left:56.00px;top:565.00px;font-size:10.2px;line-height:14px;color:#d6e23a;font-weight:normal;font-style:normal;transform:scaleX(0.8708);transform-origin:0 0;">1054 ABBA Nathalie</div>
<svg class="s" style="left:178px;top:564px;" width="16" height="16" viewBox="0 0 16 16"><circle cx="8.5" cy="7.600000000000023" r="6.7" fill="none" stroke="#d6e23a" stroke-width="1"/><path d="M5.2 12.9V12.3C5.2 11.5 6 10.9 6.9 10.5C6.1 9.9 5.6 8.6 5.6 7.3C5.6 5.6 6.7 4.4 8.1 4.4C9.5 4.4 10.6 5.6 10.6 7.3C10.6 8.6 10.1 9.9 9.3 10.5C10.2 10.9 11 11.5 11 12.3V12.9" fill="none" stroke="#d6e23a" stroke-width="1" transform="translate(0.4,-0.39999999999997726)"/></svg>
<div class="t" style="left:202.90px;top:565.00px;font-size:10.2px;line-height:14px;color:#d6e23a;font-weight:normal;font-style:normal;transform:scaleX(0.8708);transform-origin:0 0;">539</div>
<div class="t" style="left:261.90px;top:565.00px;font-size:10.2px;line-height:14px;color:#d6e23a;font-weight:normal;font-style:normal;transform:scaleX(0.8708);transform-origin:0 0;">539 Car Benefit Adjustment</div>
<div class="t" style="left:410.30px;top:565.00px;font-size:10.2px;line-height:14px;color:#d6e23a;font-weight:normal;font-style:normal;transform:scaleX(0.8708);transform-origin:0 0;">B</div>
<div class="t" style="left:439.10px;top:565.00px;font-size:10.2px;line-height:14px;color:#d6e23a;font-weight:normal;font-style:normal;transform:scaleX(0.8708);transform-origin:0 0;">Unit</div>
<div class="t" style="left:505.27px;top:565.00px;font-size:10.2px;line-height:14px;color:#d6e23a;font-weight:normal;font-style:normal;transform:scaleX(0.8708);transform-origin:100% 0;">0.000000</div>
<div class="t" style="left:576.34px;top:565.00px;font-size:10.2px;line-height:14px;color:#d6e23a;font-weight:normal;font-style:normal;transform:scaleX(0.8708);transform-origin:100% 0;">37,500.00</div>
<div class="t" style="left:630.90px;top:565.00px;font-size:10.2px;line-height:14px;color:#d6e23a;font-weight:normal;font-style:normal;transform:scaleX(0.8708);transform-origin:0 0;">MUR</div>
<div class="t" style="left:705.00px;top:565.00px;font-size:10.2px;line-height:14px;color:#d6e23a;font-weight:normal;font-style:normal;transform:scaleX(0.8708);transform-origin:0 0;">01/11/2025</div>
<svg class="s" style="left:871px;top:567px;" width="13" height="13" viewBox="0 0 13 13"><rect x="0.5" y="0.5" width="11.5" height="11.5" fill="none" stroke="#6a7476" stroke-width="1"/></svg>
<svg class="s" style="left:30px;top:585px;" width="13" height="13" viewBox="0 0 13 13"><rect x="0.5" y="0.5" width="11.3" height="11.3" fill="none" stroke="#6f797b" stroke-width="1"/><path d="M1.5 6L3.9 8.3L9.6 2" fill="none" stroke="#eaeef0" stroke-width="2.1" stroke-linecap="butt"/></svg>
<div class="t" style="left:56.00px;top:584.00px;font-size:10.2px;line-height:14px;color:#eaeef0;font-weight:normal;font-style:normal;transform:scaleX(0.8708);transform-origin:0 0;">1054 ABBA Nathalie</div>
<svg class="s" style="left:178px;top:582px;" width="16" height="16" viewBox="0 0 16 16"><circle cx="8.5" cy="8.0" r="6.7" fill="none" stroke="#eaeef0" stroke-width="1"/><path d="M5.2 12.9V12.3C5.2 11.5 6 10.9 6.9 10.5C6.1 9.9 5.6 8.6 5.6 7.3C5.6 5.6 6.7 4.4 8.1 4.4C9.5 4.4 10.6 5.6 10.6 7.3C10.6 8.6 10.1 9.9 9.3 10.5C10.2 10.9 11 11.5 11 12.3V12.9" fill="none" stroke="#eaeef0" stroke-width="1" transform="translate(0.4,0.0)"/></svg>
<div class="t" style="left:202.90px;top:584.00px;font-size:10.2px;line-height:14px;color:#eaeef0;font-weight:normal;font-style:normal;transform:scaleX(0.8708);transform-origin:0 0;">710</div>
<div class="t" style="left:261.90px;top:584.00px;font-size:10.2px;line-height:14px;color:#eaeef0;font-weight:normal;font-style:normal;transform:scaleX(0.8708);transform-origin:0 0;">Health Insurance Ee</div>
<div class="t" style="left:410.30px;top:584.00px;font-size:10.2px;line-height:14px;color:#eaeef0;font-weight:normal;font-style:normal;transform:scaleX(0.8708);transform-origin:0 0;">D</div>
<div class="t" style="left:439.10px;top:584.00px;font-size:10.2px;line-height:14px;color:#eaeef0;font-weight:normal;font-style:normal;transform:scaleX(0.8708);transform-origin:0 0;">Unit</div>
<div class="t" style="left:505.27px;top:584.00px;font-size:10.2px;line-height:14px;color:#eaeef0;font-weight:normal;font-style:normal;transform:scaleX(0.8708);transform-origin:100% 0;">0.000000</div>
<div class="t" style="left:582.01px;top:584.00px;font-size:10.2px;line-height:14px;color:#eaeef0;font-weight:normal;font-style:normal;transform:scaleX(0.8708);transform-origin:100% 0;">2,022.50</div>
<div class="t" style="left:630.90px;top:584.00px;font-size:10.2px;line-height:14px;color:#eaeef0;font-weight:normal;font-style:normal;transform:scaleX(0.8708);transform-origin:0 0;">MUR</div>
<div class="t" style="left:705.00px;top:584.00px;font-size:10.2px;line-height:14px;color:#eaeef0;font-weight:normal;font-style:normal;transform:scaleX(0.8708);transform-origin:0 0;">01/10/2011</div>
<svg class="s" style="left:871px;top:585px;" width="13" height="13" viewBox="0 0 13 13"><rect x="0.5" y="0.5" width="11.5" height="11.5" fill="none" stroke="#6a7476" stroke-width="1"/></svg>
<svg class="s" style="left:30px;top:603px;" width="13" height="13" viewBox="0 0 13 13"><rect x="0.5" y="0.5" width="11.3" height="11.3" fill="none" stroke="#6f797b" stroke-width="1"/><path d="M1.5 6L3.9 8.3L9.6 2" fill="none" stroke="#eaeef0" stroke-width="2.1" stroke-linecap="butt"/></svg>
<div class="t" style="left:56.00px;top:602.00px;font-size:10.2px;line-height:14px;color:#eaeef0;font-weight:normal;font-style:normal;transform:scaleX(0.8708);transform-origin:0 0;">1054 ABBA Nathalie</div>
<svg class="s" style="left:178px;top:600px;" width="16" height="16" viewBox="0 0 16 16"><circle cx="8.5" cy="8.399999999999977" r="6.7" fill="none" stroke="#eaeef0" stroke-width="1"/><path d="M5.2 12.9V12.3C5.2 11.5 6 10.9 6.9 10.5C6.1 9.9 5.6 8.6 5.6 7.3C5.6 5.6 6.7 4.4 8.1 4.4C9.5 4.4 10.6 5.6 10.6 7.3C10.6 8.6 10.1 9.9 9.3 10.5C10.2 10.9 11 11.5 11 12.3V12.9" fill="none" stroke="#eaeef0" stroke-width="1" transform="translate(0.4,0.39999999999997726)"/></svg>
<div class="t" style="left:202.90px;top:602.00px;font-size:10.2px;line-height:14px;color:#eaeef0;font-weight:normal;font-style:normal;transform:scaleX(0.8708);transform-origin:0 0;">711</div>
<div class="t" style="left:261.90px;top:602.00px;font-size:10.2px;line-height:14px;color:#eaeef0;font-weight:normal;font-style:normal;transform:scaleX(0.8708);transform-origin:0 0;">Health Insurance (Dependent)</div>
<div class="t" style="left:410.30px;top:602.00px;font-size:10.2px;line-height:14px;color:#eaeef0;font-weight:normal;font-style:normal;transform:scaleX(0.8708);transform-origin:0 0;">D</div>
<div class="t" style="left:439.10px;top:602.00px;font-size:10.2px;line-height:14px;color:#eaeef0;font-weight:normal;font-style:normal;transform:scaleX(0.8708);transform-origin:0 0;">Unit</div>
<div class="t" style="left:505.27px;top:602.00px;font-size:10.2px;line-height:14px;color:#eaeef0;font-weight:normal;font-style:normal;transform:scaleX(0.8708);transform-origin:100% 0;">0.000000</div>
<div class="t" style="left:582.01px;top:602.00px;font-size:10.2px;line-height:14px;color:#eaeef0;font-weight:normal;font-style:normal;transform:scaleX(0.8708);transform-origin:100% 0;">1,420.00</div>
<div class="t" style="left:630.90px;top:602.00px;font-size:10.2px;line-height:14px;color:#eaeef0;font-weight:normal;font-style:normal;transform:scaleX(0.8708);transform-origin:0 0;">MUR</div>
<div class="t" style="left:705.00px;top:602.00px;font-size:10.2px;line-height:14px;color:#eaeef0;font-weight:normal;font-style:normal;transform:scaleX(0.8708);transform-origin:0 0;">01/10/2011</div>
<svg class="s" style="left:871px;top:603px;" width="13" height="13" viewBox="0 0 13 13"><rect x="0.5" y="0.5" width="11.5" height="11.5" fill="none" stroke="#6a7476" stroke-width="1"/></svg>
<svg class="s" style="left:30px;top:622px;" width="13" height="13" viewBox="0 0 13 13"><rect x="0.5" y="0.5" width="11.3" height="11.3" fill="none" stroke="#6f797b" stroke-width="1"/><path d="M1.5 6L3.9 8.3L9.6 2" fill="none" stroke="#eaeef0" stroke-width="2.1" stroke-linecap="butt"/></svg>
<div class="t" style="left:56.00px;top:621.00px;font-size:10.2px;line-height:14px;color:#eaeef0;font-weight:normal;font-style:normal;transform:scaleX(0.8708);transform-origin:0 0;">1054 ABBA Nathalie</div>
<svg class="s" style="left:178px;top:619px;" width="16" height="16" viewBox="0 0 16 16"><circle cx="8.5" cy="7.7999999999999545" r="6.7" fill="none" stroke="#eaeef0" stroke-width="1"/><path d="M5.2 12.9V12.3C5.2 11.5 6 10.9 6.9 10.5C6.1 9.9 5.6 8.6 5.6 7.3C5.6 5.6 6.7 4.4 8.1 4.4C9.5 4.4 10.6 5.6 10.6 7.3C10.6 8.6 10.1 9.9 9.3 10.5C10.2 10.9 11 11.5 11 12.3V12.9" fill="none" stroke="#eaeef0" stroke-width="1" transform="translate(0.4,-0.20000000000004547)"/></svg>
<div class="t" style="left:202.90px;top:621.00px;font-size:10.2px;line-height:14px;color:#eaeef0;font-weight:normal;font-style:normal;transform:scaleX(0.8708);transform-origin:0 0;">712</div>
<div class="t" style="left:261.90px;top:621.00px;font-size:10.2px;line-height:14px;color:#eaeef0;font-weight:normal;font-style:normal;transform:scaleX(0.8708);transform-origin:0 0;">Health Insurance Er</div>
<div class="t" style="left:410.30px;top:621.00px;font-size:10.2px;line-height:14px;color:#eaeef0;font-weight:normal;font-style:normal;transform:scaleX(0.8708);transform-origin:0 0;">E</div>
<div class="t" style="left:439.10px;top:621.00px;font-size:10.2px;line-height:14px;color:#eaeef0;font-weight:normal;font-style:normal;transform:scaleX(0.8708);transform-origin:0 0;">Unit</div>
<div class="t" style="left:505.27px;top:621.00px;font-size:10.2px;line-height:14px;color:#eaeef0;font-weight:normal;font-style:normal;transform:scaleX(0.8708);transform-origin:100% 0;">0.000000</div>
<div class="t" style="left:590.51px;top:621.00px;font-size:10.2px;line-height:14px;color:#eaeef0;font-weight:normal;font-style:normal;transform:scaleX(0.8708);transform-origin:100% 0;">426.50</div>
<div class="t" style="left:630.90px;top:621.00px;font-size:10.2px;line-height:14px;color:#eaeef0;font-weight:normal;font-style:normal;transform:scaleX(0.8708);transform-origin:0 0;">MUR</div>
<div class="t" style="left:705.00px;top:621.00px;font-size:10.2px;line-height:14px;color:#eaeef0;font-weight:normal;font-style:normal;transform:scaleX(0.8708);transform-origin:0 0;">01/10/2011</div>
<svg class="s" style="left:871px;top:622px;" width="13" height="13" viewBox="0 0 13 13"><rect x="0.5" y="0.5" width="11.5" height="11.5" fill="none" stroke="#6a7476" stroke-width="1"/></svg>
<svg class="s" style="left:4px;top:639px;" width="11" height="11" viewBox="0 0 11 11"><path d="M5.5 1.3V9.7M1.9 3.4L9.1 7.6M1.9 7.6L9.1 3.4" stroke="#c5cacd" stroke-width="2"/></svg>
<svg class="s" style="left:30px;top:640px;" width="13" height="13" viewBox="0 0 13 13"><rect x="0.5" y="0.5" width="11.3" height="11.3" fill="none" stroke="#6f797b" stroke-width="1"/><path d="M1.5 6L3.9 8.3L9.6 2" fill="none" stroke="#eaeef0" stroke-width="2.1" stroke-linecap="butt"/></svg>
<div class="t" style="left:505.27px;top:639.00px;font-size:10.2px;line-height:14px;color:#eaeef0;font-weight:normal;font-style:normal;transform:scaleX(0.8708);transform-origin:100% 0;">0.000000</div>
<div class="t" style="left:601.86px;top:639.00px;font-size:10.2px;line-height:14px;color:#eaeef0;font-weight:normal;font-style:normal;transform:scaleX(0.8708);transform-origin:100% 0;">0.00</div>
<div class="t" style="left:630.90px;top:639.00px;font-size:10.2px;line-height:14px;color:#eaeef0;font-weight:normal;font-style:normal;transform:scaleX(0.8708);transform-origin:0 0;">MUR</div>
<svg class="s" style="left:871px;top:640px;" width="13" height="13" viewBox="0 0 13 13"><rect x="0.5" y="0.5" width="11.5" height="11.5" fill="none" stroke="#6a7476" stroke-width="1"/></svg>
<div class="t" style="left:493.92px;top:657.00px;font-size:10.2px;line-height:14px;color:#e9eeee;font-weight:bold;font-style:normal;transform:scaleX(0.8647);transform-origin:100% 0;-webkit-text-stroke-width:0;">150.000000</div>
<div class="t" style="left:582.01px;top:657.00px;font-size:10.2px;line-height:14px;color:#e9eeee;font-weight:bold;font-style:normal;transform:scaleX(0.8647);transform-origin:100% 0;-webkit-text-stroke-width:0;">8,869.00</div>
</div>
<svg class="s" style="left:0;top:0" width="1420" height="687" viewBox="0 0 1420 687"><ellipse cx="475.5" cy="533.1" rx="302.3" ry="16.4" fill="none" stroke="#ff0000" stroke-width="4.4"/><path d="M387.1 203V502" stroke="#ff0000" stroke-width="2.2"/><path d="M380.1 501.5H394L387.1 514.4Z" fill="#ff0000"/><ellipse cx="475.3" cy="570.5" rx="309" ry="15.3" fill="none" stroke="#ffc000" stroke-width="4.4"/><path d="M1075.8 247L794.06 560.38" stroke="#ffc000" stroke-width="2.1"/><path d="M785.5 569.9L799.19 564.99L788.93 555.77Z" fill="#ffc000"/></svg></body></html>
